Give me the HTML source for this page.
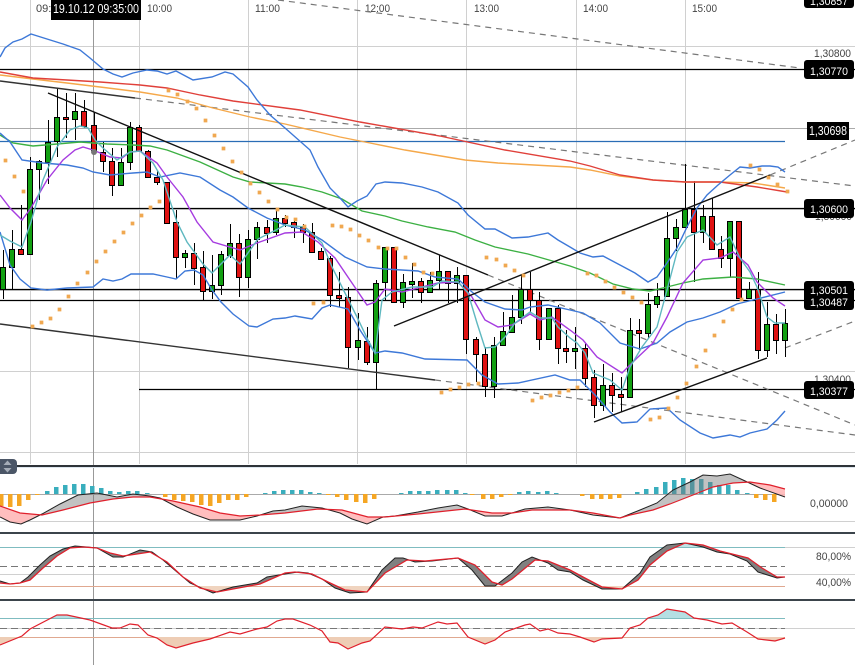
<!DOCTYPE html>
<html><head><meta charset="utf-8"><style>
html,body{margin:0;padding:0;background:#fff;width:855px;height:665px;overflow:hidden}
svg{display:block;filter:blur(.3px)}
text{font-family:"Liberation Sans",sans-serif}
.t{fill:#444;font-size:11px}
.w{fill:#fff;font-size:11px}
.g{fill:#12a012;stroke:#000}
.r{fill:#e01212;stroke:#000}
.l{fill:none}
</style></head><body>
<svg width="855" height="665" viewBox="0 0 855 665" xmlns="http://www.w3.org/2000/svg">
<defs>
<clipPath id="abv"><polygon points="0,0 0,506 20,513 42,515 63,510 90,503 113,499 133,497 150,497 173,501 200,507 220,513 240,516 260,515 285,513 318,509 342,510 368,517 385,517 418,514 465,509 492,513 512,513 532,510 570,510 593,513 620,518 630,515 653,510 670,504 693,495 713,487 733,483 750,482 770,485 785,489 785,0"/></clipPath>
<clipPath id="blw"><polygon points="0,665 0,506 20,513 42,515 63,510 90,503 113,499 133,497 150,497 173,501 200,507 220,513 240,516 260,515 285,513 318,509 342,510 368,517 385,517 418,514 465,509 492,513 512,513 532,510 570,510 593,513 620,518 630,515 653,510 670,504 693,495 713,487 733,483 750,482 770,485 785,489 785,665"/></clipPath>
<clipPath id="t3"><rect x="0" y="600" width="800" height="18"/></clipPath>
<clipPath id="b3"><rect x="0" y="637" width="800" height="28"/></clipPath>
</defs>

<!-- grid -->
<g stroke="#d0d0d0" stroke-width="1" shape-rendering="crispEdges">
<path d="M30.5 0V464M139.5 0V464M248.5 0V464M357.5 0V464M466.5 0V464M576.5 0V464M685.5 0V464"/>
<path d="M0 46.5H855M0 209.5H855M0 290.5H855M0 371.5H855M0 452.5H855"/>
<path d="M0 521.5H855M0 547.5H855M0 574.5H855M0 628.5H855"/>
</g>
<path d="M0 128.5H855" stroke="#aaa" shape-rendering="crispEdges"/>
<path d="M93.5 20V665" stroke="#999" shape-rendering="crispEdges"/>

<!-- axis text -->
<text class="t" x="36" y="12">09:</text>
<text class="t" x="147" y="12" textLength="25" lengthAdjust="spacingAndGlyphs">10:00</text>
<text class="t" x="255" y="12" textLength="25" lengthAdjust="spacingAndGlyphs">11:00</text>
<text class="t" x="365" y="12" textLength="25" lengthAdjust="spacingAndGlyphs">12:00</text>
<text class="t" x="474" y="12" textLength="25" lengthAdjust="spacingAndGlyphs">13:00</text>
<text class="t" x="583" y="12" textLength="25" lengthAdjust="spacingAndGlyphs">14:00</text>
<text class="t" x="692" y="12" textLength="25" lengthAdjust="spacingAndGlyphs">15:00</text>
<text class="t" x="814" y="57" textLength="37" lengthAdjust="spacingAndGlyphs">1,30800</text>
<text class="t" x="815" y="220" textLength="37" lengthAdjust="spacingAndGlyphs">1,30600</text>
<text class="t" x="814" y="383" textLength="37" lengthAdjust="spacingAndGlyphs">1,30400</text>
<text class="t" x="810" y="507" textLength="38" lengthAdjust="spacingAndGlyphs">0,00000</text>
<text class="t" x="816" y="560" textLength="35" lengthAdjust="spacingAndGlyphs">80,00%</text>
<text class="t" x="816" y="586" textLength="35" lengthAdjust="spacingAndGlyphs">40,00%</text>

<!-- horizontal level lines -->
<g stroke="#000" stroke-width="1.2">
<path d="M0 69.5H855M0 208.5H855M0 289.5H855M0 300.5H855M139 389.5H855"/>
</g>
<path d="M0 141.5H785" stroke="#2a6db5" stroke-width="1.2"/>

<!-- dashed trend lines -->
<g stroke="#777" stroke-width="1.2" stroke-dasharray="6 5" fill="none">
<path d="M278 0L800 68"/>
<path d="M135 98L855 186"/>
<path d="M488 275L855 425"/>
<path d="M435 380L855 435"/>
<path d="M770 175L855 140"/>
<path d="M785 348L855 321"/>
</g>

<!-- candles -->
<g shape-rendering="crispEdges">
<path stroke="#000" fill="none" d="M3.5 250V299M12.5 230V290M21.5 205V255M30.5 157V254M39.5 160V200M48.5 120V184M57.5 88V157M66.5 93V138M75.5 93V140M84.5 100V128M94.5 112V151M103.5 142V172M112.5 148V196M121.5 148V185M130.5 122V170M139.5 125V152M148.5 150V178M157.5 170V185M167.5 182V224M176.5 210V279M185.5 250V268M194.5 243V285M203.5 251V301M212.5 255V299M221.5 251V295M230.5 224V258M239.5 234V297M248.5 230V288M257.5 222V259M267.5 220V243M276.5 211V235M285.5 215V227M294.5 218V238M303.5 224V243M312.5 223V252M321.5 248V259M330.5 256V307M339.5 272V307M348.5 287V368M358.5 313V360M367.5 327V365M376.5 280V390M385.5 247V300M394.5 247V303M403.5 274V308M412.5 263V298M421.5 278V303M430.5 272V293M439.5 255V290M448.5 272V303M457.5 267V303M466.5 275V354M476.5 337V382M485.5 347V397M494.5 337V398M503.5 312V345M512.5 295V332M521.5 275V324M530.5 272V313M539.5 292V350M549.5 308V339M558.5 305V364M566.5 330V363M575.5 327V369M585.5 343V387M594.5 370V418M603.5 364V411M612.5 373V412M621.5 377V412M630.5 318V397M639.5 319V350M648.5 293V338M657.5 283V308M667.5 212V297M676.5 219V251M685.5 164V227M694.5 181V282M703.5 205V243M712.5 198V249M721.5 236V268M730.5 221V277M739.5 221V299M749.5 282V299M758.5 272V359M767.5 302V357M776.5 314V354M785.5 309V357"/>
<rect class="g" x="0.5" y="267.5" width="5" height="22"/>
<rect class="g" x="9.5" y="249.5" width="5" height="18"/>
<rect class="r" x="18.5" y="249.5" width="5" height="5"/>
<rect class="g" x="27.5" y="169.5" width="5" height="85"/>
<rect class="g" x="36.5" y="161.5" width="5" height="8"/>
<rect class="g" x="45.5" y="142.5" width="5" height="20"/>
<rect class="g" x="54.5" y="117.5" width="5" height="24"/>
<rect class="r" x="63.5" y="117.5" width="5" height="2"/>
<rect class="g" x="72.5" y="111.5" width="5" height="8"/>
<rect class="r" x="81.5" y="111.5" width="5" height="15"/>
<rect class="r" x="91.5" y="125.5" width="5" height="25"/>
<rect class="r" x="100.5" y="152.5" width="5" height="9"/>
<rect class="r" x="109.5" y="161.5" width="5" height="24"/>
<rect class="g" x="118.5" y="162.5" width="5" height="23"/>
<rect class="g" x="127.5" y="127.5" width="5" height="35"/>
<rect class="r" x="136.5" y="127.5" width="5" height="24"/>
<rect class="r" x="145.5" y="151.5" width="5" height="26"/>
<rect class="r" x="154.5" y="177.5" width="5" height="5"/>
<rect class="r" x="164.5" y="182.5" width="5" height="41"/>
<rect class="r" x="173.5" y="222.5" width="5" height="35"/>
<rect class="g" x="182.5" y="253.5" width="5" height="4"/>
<rect class="r" x="191.5" y="253.5" width="5" height="15"/>
<rect class="r" x="200.5" y="267.5" width="5" height="24"/>
<rect class="g" x="209.5" y="285.5" width="5" height="6"/>
<rect class="g" x="218.5" y="254.5" width="5" height="31"/>
<rect class="g" x="227.5" y="243.5" width="5" height="12"/>
<rect class="r" x="236.5" y="243.5" width="5" height="34"/>
<rect class="g" x="245.5" y="239.5" width="5" height="38"/>
<rect class="g" x="254.5" y="227.5" width="5" height="12"/>
<rect class="r" x="264.5" y="227.5" width="5" height="6"/>
<rect class="g" x="273.5" y="218.5" width="5" height="14"/>
<rect class="r" x="282.5" y="218.5" width="5" height="5"/>
<rect class="r" x="291.5" y="222.5" width="5" height="5"/>
<rect class="r" x="300.5" y="227.5" width="5" height="5"/>
<rect class="r" x="309.5" y="232.5" width="5" height="20"/>
<rect class="r" x="318.5" y="251.5" width="5" height="8"/>
<rect class="r" x="327.5" y="258.5" width="5" height="37"/>
<rect class="r" x="336.5" y="295.5" width="5" height="3"/>
<rect class="r" x="345.5" y="297.5" width="5" height="50"/>
<rect class="g" x="355.5" y="340.5" width="5" height="7"/>
<rect class="r" x="364.5" y="341.5" width="5" height="21"/>
<rect class="g" x="373.5" y="283.5" width="5" height="79"/>
<rect class="g" x="382.5" y="247.5" width="5" height="35"/>
<rect class="r" x="391.5" y="247.5" width="5" height="55"/>
<rect class="g" x="400.5" y="282.5" width="5" height="20"/>
<rect class="g" x="409.5" y="281.5" width="5" height="3"/>
<rect class="r" x="418.5" y="281.5" width="5" height="11"/>
<rect class="g" x="427.5" y="280.5" width="5" height="12"/>
<rect class="g" x="436.5" y="271.5" width="5" height="9"/>
<rect class="r" x="445.5" y="271.5" width="5" height="12"/>
<rect class="g" x="454.5" y="275.5" width="5" height="8"/>
<rect class="r" x="463.5" y="275.5" width="5" height="64"/>
<rect class="r" x="473.5" y="339.5" width="5" height="15"/>
<rect class="r" x="482.5" y="354.5" width="5" height="32"/>
<rect class="g" x="491.5" y="345.5" width="5" height="41"/>
<rect class="g" x="500.5" y="331.5" width="5" height="14"/>
<rect class="g" x="509.5" y="317.5" width="5" height="15"/>
<rect class="g" x="518.5" y="289.5" width="5" height="28"/>
<rect class="r" x="527.5" y="289.5" width="5" height="11"/>
<rect class="r" x="536.5" y="300.5" width="5" height="39"/>
<rect class="g" x="546.5" y="308.5" width="5" height="31"/>
<rect class="r" x="555.5" y="308.5" width="5" height="40"/>
<rect class="r" x="563.5" y="348.5" width="5" height="3"/>
<rect class="g" x="572.5" y="348.5" width="5" height="3"/>
<rect class="r" x="582.5" y="348.5" width="5" height="30"/>
<rect class="r" x="591.5" y="377.5" width="5" height="28"/>
<rect class="g" x="600.5" y="385.5" width="5" height="20"/>
<rect class="r" x="609.5" y="385.5" width="5" height="10"/>
<rect class="r" x="618.5" y="394.5" width="5" height="3"/>
<rect class="g" x="627.5" y="330.5" width="5" height="67"/>
<rect class="r" x="636.5" y="330.5" width="5" height="3"/>
<rect class="g" x="645.5" y="304.5" width="5" height="29"/>
<rect class="g" x="654.5" y="296.5" width="5" height="8"/>
<rect class="g" x="664.5" y="238.5" width="5" height="58"/>
<rect class="g" x="673.5" y="227.5" width="5" height="11"/>
<rect class="g" x="682.5" y="209.5" width="5" height="18"/>
<rect class="r" x="691.5" y="209.5" width="5" height="23"/>
<rect class="g" x="700.5" y="216.5" width="5" height="16"/>
<rect class="r" x="709.5" y="216.5" width="5" height="33"/>
<rect class="r" x="718.5" y="249.5" width="5" height="9"/>
<rect class="g" x="727.5" y="221.5" width="5" height="37"/>
<rect class="r" x="736.5" y="221.5" width="5" height="77"/>
<rect class="g" x="746.5" y="289.5" width="5" height="9"/>
<rect class="r" x="755.5" y="289.5" width="5" height="61"/>
<rect class="g" x="764.5" y="324.5" width="5" height="26"/>
<rect class="r" x="773.5" y="324.5" width="5" height="16"/>
<rect class="g" x="782.5" y="323.5" width="5" height="17"/>
</g>

<!-- moving averages -->
<g fill="none" stroke-width="1.4">
<polyline stroke="#f5a84a" points="0,75 33,79 67,83 100,87 140,92 177,98 213,108 250,117 285,124 340,137 370,143 405,150 435,155 465,160 498,163 570,167 590,170 620,176 653,180 685,182 720,182 753,183 785,188"/>
<polyline stroke="#e0403a" points="0,72 33,78 67,80 100,82 140,85 167,88 200,95 233,101 285,108 300,110 360,122 440,136 505,150 570,161 590,166 620,175 653,180 685,182 720,182 757,187 787,192"/>
<polyline stroke="#3cb043" points="0,135 13,143 33,146 57,144 80,142 107,144 133,145 150,146 167,150 200,162 233,177 250,182 285,184 302,187 322,192 342,199 362,211 385,216 402,221 428,227 455,232 475,240 495,247 528,254 570,266 590,273 613,284 633,289 650,291 667,287 683,283 703,279 733,277 757,279 785,285"/>
<polyline stroke="#3d78d8" points="0,57 5,48 13,42 22,39 31,34 47,39 63,44 80,50 90,58 103,69 113,74 122,77 133,73 147,70 157,71 167,74 176,71 193,80 212,77 225,72 233,74 248,87 257,100 270,115 285,128 310,150 318,167 330,188 340,198 348,207 357,201 367,196 376,184 385,182 402,183 422,187 438,192 458,203 468,215 485,229 495,229 512,238 528,237 548,233 558,240 570,247 580,253 593,257 603,256 620,265 635,273 648,282 657,277 667,263 677,248 687,227 697,208 707,195 718,185 730,175 740,167 750,168 762,166 770,166 778,167 785,172"/>
<polyline stroke="#3d78d8" points="0,133 10,142 22,160 43,163 67,165 83,168 93,172 110,175 133,173 147,172 160,177 180,173 200,177 220,190 233,197 248,208 267,218 285,225 305,230 322,240 345,257 367,267 385,269 418,271 435,277 458,279 472,292 485,302 505,309 522,310 530,307 548,305 570,310 583,313 600,323 620,343 640,349 657,343 670,332 687,322 703,318 720,312 737,304 757,299 785,292"/>
<polyline stroke="#3d78d8" points="0,232 10,265 20,279 31,288 47,290 67,288 93,287 103,279 113,281 122,279 131,274 153,274 167,277 176,279 185,271 194,270 203,275 212,290 221,302 233,314 249,326 257,327 273,319 285,318 295,316 312,319 322,308 330,305 348,309 360,330 375,353 385,351 402,353 425,359 467,360 482,375 498,384 518,383 555,375 570,380 580,380 597,397 610,412 622,423 637,422 650,409 667,408 680,420 700,433 713,438 730,435 740,437 750,433 767,429 777,420 785,411"/>
<polyline stroke="#a63ce0" points="0,195 10,208 22,220 31,208 47,180 63,160 75,150 83,147 93,150 110,157 122,158 130,152 140,151 157,163 167,177 183,197 197,222 213,242 240,250 257,243 285,233 302,232 318,242 335,258 352,283 367,305 375,302 385,289 402,292 418,288 438,283 458,282 472,297 485,320 498,327 512,325 530,314 540,320 552,317 570,330 583,340 597,357 622,373 637,358 653,343 667,317 683,283 703,260 720,258 733,252 748,265 757,282 773,298 785,306"/>
<polyline stroke="#5fb8c0" points="0,235 10,241 22,247 31,222 43,180 57,147 70,130 80,126 88,128 95,140 103,148 117,160 130,152 140,151 153,163 163,180 177,222 187,242 203,264 212,273 230,255 240,264 258,239 276,230 285,225 305,227 322,243 332,267 345,293 357,317 368,340 375,353 382,300 392,292 412,287 432,287 442,281 458,282 468,293 477,323 485,348 495,347 505,337 515,323 530,312 540,318 552,318 558,327 570,338 577,343 585,353 593,373 610,380 622,390 630,367 642,347 657,327 667,290 677,252 687,237 703,230 717,245 730,237 740,258 750,272 757,287 767,317 775,323 785,323"/>
</g>

<!-- solid trend lines -->
<g stroke="#111" stroke-width="1.4" fill="none">
<path d="M0 81L135 98" stroke="#333"/>
<path d="M48 93L488 275"/>
<path d="M0 324L435 380" stroke="#333"/>
<path d="M394 326L770 175"/>
<path d="M594 422L767 358"/>
</g>

<!-- parabolic SAR -->
<g fill="#f0a850" stroke="#f0a850" stroke-width=".7">
<path d="M4 159h3v3h-3zM13 175h3v3h-3zM22 190h3v3h-3zM31 325h3v3h-3zM40 321h3v3h-3zM49 317h3v3h-3zM58 308h3v3h-3zM67 295h3v3h-3zM76 282h3v3h-3zM86 271h3v3h-3zM95 260h3v3h-3zM104 250h3v3h-3zM113 240h3v3h-3zM122 231h3v3h-3zM131 222h3v3h-3zM140 214h3v3h-3zM149 206h3v3h-3zM158 200h3v3h-3zM167 89h3v3h-3zM176 93h3v3h-3zM186 100h3v3h-3zM195 107h3v3h-3zM204 119h3v3h-3zM213 134h3v3h-3zM222 147h3v3h-3zM231 160h3v3h-3zM240 171h3v3h-3zM249 182h3v3h-3zM258 191h3v3h-3zM267 200h3v3h-3zM276 208h3v3h-3zM285 216h3v3h-3zM294 218h3v3h-3zM303 225h3v3h-3zM312 302h3v3h-3zM322 301h3v3h-3zM331 224h3v3h-3zM340 225h3v3h-3zM349 228h3v3h-3zM358 234h3v3h-3zM367 239h3v3h-3zM377 246h3v3h-3zM386 247h3v3h-3zM395 247h3v3h-3zM404 256h3v3h-3zM413 263h3v3h-3zM422 271h3v3h-3zM431 272h3v3h-3zM440 391h3v3h-3zM449 388h3v3h-3zM458 386h3v3h-3zM467 383h3v3h-3zM477 382h3v3h-3zM485 256h3v3h-3zM495 258h3v3h-3zM504 264h3v3h-3zM513 269h3v3h-3zM522 274h3v3h-3zM531 399h3v3h-3zM540 396h3v3h-3zM549 394h3v3h-3zM558 391h3v3h-3zM567 389h3v3h-3zM576 386h3v3h-3zM586 272h3v3h-3zM595 274h3v3h-3zM604 280h3v3h-3zM613 286h3v3h-3zM622 291h3v3h-3zM631 296h3v3h-3zM640 301h3v3h-3zM649 418h3v3h-3zM658 416h3v3h-3zM667 407h3v3h-3zM676 396h3v3h-3zM685 382h3v3h-3zM695 365h3v3h-3zM704 349h3v3h-3zM713 334h3v3h-3zM722 320h3v3h-3zM731 308h3v3h-3zM740 298h3v3h-3zM749 164h3v3h-3zM758 168h3v3h-3zM767 176h3v3h-3zM776 183h3v3h-3zM786 190h3v3h-3z"/>
</g>
<circle cx="94" cy="152" r="3" fill="#777"/>

<!-- labels -->
<g>
<rect x="804" y="-8" width="50" height="16" rx="3" fill="#000"/>
<rect x="804" y="60" width="50" height="19" rx="3" fill="#000"/>
<rect x="807" y="122" width="42" height="18" fill="#000"/>
<rect x="804" y="199" width="50" height="19" rx="3" fill="#000"/>
<rect x="804" y="281" width="50" height="29" rx="3" fill="#000"/>
<rect x="804" y="381" width="50" height="18" rx="3" fill="#000"/>
<rect x="51" y="0" width="90" height="20" fill="#000"/>
</g>
<text class="w" x="810" y="5" textLength="38" lengthAdjust="spacingAndGlyphs">1,30857</text>
<text class="w" x="810" y="75" textLength="38" lengthAdjust="spacingAndGlyphs">1,30770</text>
<text class="w" x="809" y="135" style="font-size:12.5px" textLength="38" lengthAdjust="spacingAndGlyphs">1,30698</text>
<text class="w" x="810" y="213" textLength="38" lengthAdjust="spacingAndGlyphs">1,30600</text>
<text class="w" x="810" y="294" textLength="38" lengthAdjust="spacingAndGlyphs">1,30501</text>
<text class="w" x="810" y="306" textLength="38" lengthAdjust="spacingAndGlyphs">1,30487</text>
<text class="w" x="810" y="395" textLength="38" lengthAdjust="spacingAndGlyphs">1,30377</text>
<text class="w" x="53" y="13" style="font-size:12.5px" textLength="86" lengthAdjust="spacingAndGlyphs">19.10.12 09:35:00</text>

<!-- panel separators -->
<rect x="0" y="465" width="855" height="2" fill="#2e3338"/>
<rect x="0" y="467" width="855" height="1" fill="#dde6ee"/>
<rect x="0" y="532" width="855" height="2" fill="#3b444b"/>
<rect x="0" y="599" width="855" height="2" fill="#3b444b"/>
<rect x="-4" y="459" width="21" height="15" rx="4" fill="#4b5667"/>
<path d="M3.5 465L7.5 460.5L11.5 465ZM3.5 468L7.5 472.5L11.5 468Z" fill="#a5adb8"/>

<!-- MACD -->
<path d="M0 494.5H785" stroke="#aaa" shape-rendering="crispEdges"/>
<path stroke="#39aebd" stroke-width="4.5" fill="none" shape-rendering="crispEdges" d="M47 494V491M56 494V487M65 494V485M74 494V484M83 494V484M92 494V486M101 494V488M110 494V491M119 494V492M128 494V491M137 494V491M147 494V493M265 494V493M274 494V491M283 494V490M292 494V490M301 494V490M310 494V492M319 494V493M401 494V493M410 494V491M419 494V491M428 494V491M437 494V490M447 494V490M456 494V490M465 494V493M519 494V492M528 494V491M538 494V492M547 494V491M556 494V493M637 494V492M646 494V489M656 494V487M665 494V482M674 494V480M683 494V478M692 494V479M701 494V479M710 494V482M719 494V485M728 494V485M737 494V490M747 494V493"/>
<path stroke="#f5a623" stroke-width="4.5" fill="none" shape-rendering="crispEdges" d="M1 494V506M10 494V507M19 494V506M28 494V500M37 494V495M165 494V497M174 494V500M183 494V501M192 494V502M201 494V505M210 494V506M219 494V503M228 494V500M237 494V500M246 494V497M328 494V495M337 494V497M346 494V500M356 494V502M365 494V503M374 494V499M472 494V495M483 494V499M492 494V499M501 494V497M510 494V495M582 494V496M592 494V499M601 494V499M610 494V499M619 494V498M756 494V498M765 494V500M774 494V502"/>
<polygon clip-path="url(#abv)" fill="#777" fill-opacity=".45" points="0,517 10,522 21,524 30,520 42,514 60,504 78,495 97,493 117,497 133,494 150,496 160,498 177,507 193,514 210,520 220,520 240,520 257,516 273,511 285,510 302,506 322,508 340,513 352,519 367,524 383,517 395,516 418,512 438,508 457,505 468,509 485,516 502,516 525,509 548,507 570,510 593,515 620,518 640,510 657,503 673,490 690,482 703,475 717,476 730,474 743,480 760,488 783,496 785,489 770,485 750,482 733,483 713,487 693,495 670,504 653,510 630,515 620,518 593,513 570,510 532,510 512,513 492,513 465,509 418,514 385,517 368,517 342,510 318,509 285,513 260,515 240,516 220,513 200,507 173,501 150,497 133,497 113,499 90,503 63,510 42,515 20,513 0,506"/>
<polygon clip-path="url(#blw)" fill="#ffb3b3" fill-opacity=".85" points="0,517 10,522 21,524 30,520 42,514 60,504 78,495 97,493 117,497 133,494 150,496 160,498 177,507 193,514 210,520 220,520 240,520 257,516 273,511 285,510 302,506 322,508 340,513 352,519 367,524 383,517 395,516 418,512 438,508 457,505 468,509 485,516 502,516 525,509 548,507 570,510 593,515 620,518 640,510 657,503 673,490 690,482 703,475 717,476 730,474 743,480 760,488 785,497 785,489 770,485 750,482 733,483 713,487 693,495 670,504 653,510 630,515 620,518 593,513 570,510 532,510 512,513 492,513 465,509 418,514 385,517 368,517 342,510 318,509 285,513 260,515 240,516 220,513 200,507 173,501 150,497 133,497 113,499 90,503 63,510 42,515 20,513 0,506"/>
<polyline class="l" stroke="#222" points="0,517 10,522 21,524 30,520 42,514 60,504 78,495 97,493 117,497 133,494 150,496 160,498 177,507 193,514 210,520 220,520 240,520 257,516 273,511 285,510 302,506 322,508 340,513 352,519 367,524 383,517 395,516 418,512 438,508 457,505 468,509 485,516 502,516 525,509 548,507 570,510 593,515 620,518 640,510 657,503 673,490 690,482 703,475 717,476 730,474 743,480 760,488 785,497"/>
<polyline class="l" stroke="#e0202c" stroke-width="1.2" points="0,506 20,513 42,515 63,510 90,503 113,499 133,497 150,497 173,501 200,507 220,513 240,516 260,515 285,513 318,509 342,510 368,517 385,517 418,514 465,509 492,513 512,513 532,510 570,510 593,513 620,518 630,515 653,510 670,504 693,495 713,487 733,483 750,482 770,485 785,489"/>

<!-- Stochastic -->
<path d="M0 547.5H785" stroke="#7fbcc0" shape-rendering="crispEdges"/>
<path d="M0 586.5H785" stroke="#e0a890" shape-rendering="crispEdges"/>
<path d="M0 566.5H785" stroke="#777" stroke-dasharray="7 4"/>
<polygon fill="#f0d4bf" points="196,586 213,593 233,589 240,586"/>
<polygon fill="#f0d4bf" points="330,586 350,593 367,592 372,586"/>
<polygon fill="#f0d4bf" points="598,586 622,589 630,586"/>
<polygon fill="#bfe3e6" points="664,547 685,543 706,547"/>
<polygon fill="#808080" points="0,581 10,584 20,583 28,577 40,565 50,556 63,549 75,546 87,547 97,548 113,557 123,557 140,550 152,552 163,560 177,572 190,583 213,593 223,590 233,587 257,583 267,577 285,574 298,572 308,573 322,579 335,588 350,593 367,592 382,570 395,558 403,558 415,562 432,561 458,558 472,570 485,586 495,586 512,573 522,562 532,557 548,563 558,570 570,572 583,580 602,589 622,589 640,573 650,557 667,545 685,543 703,547 717,552 730,554 747,561 758,572 777,578 785,577 777,577 762,568 748,558 720,551 703,545 685,543 667,551 650,565 638,580 622,589 602,587 583,577 570,570 548,561 535,560 512,579 502,585 492,582 475,565 458,558 425,561 407,560 385,573 367,592 345,590 328,582 312,574 295,572 285,573 260,584 233,589 217,592 200,588 183,577 167,562 150,552 137,554 123,556 110,553 97,548 83,547 70,548 57,556 43,568 30,580 20,583 10,584 0,583"/>
<polyline class="l" stroke="#222" points="0,581 10,584 20,583 28,577 40,565 50,556 63,549 75,546 87,547 97,548 113,557 123,557 140,550 152,552 163,560 177,572 190,583 213,593 223,590 233,587 257,583 267,577 285,574 298,572 308,573 322,579 335,588 350,593 367,592 382,570 395,558 403,558 415,562 432,561 458,558 472,570 485,586 495,586 512,573 522,562 532,557 548,563 558,570 570,572 583,580 602,589 622,589 640,573 650,557 667,545 685,543 703,547 717,552 730,554 747,561 758,572 777,578 785,577"/>
<polyline class="l" stroke="#e0202c" stroke-width="1.3" points="0,583 10,584 20,583 30,580 43,568 57,556 70,548 83,547 97,548 110,553 123,556 137,554 150,552 167,562 183,577 200,588 217,592 233,589 260,584 285,573 295,572 312,574 328,582 345,590 367,592 385,573 407,560 425,561 458,558 475,565 492,582 502,585 512,579 535,560 548,561 570,570 583,577 602,587 622,589 638,580 650,565 667,551 685,543 703,545 720,551 748,558 762,568 777,577 785,577"/>

<!-- RSI -->
<path d="M0 618.5H785" stroke="#7fbcc0" shape-rendering="crispEdges"/>
<path d="M0 637.5H785" stroke="#e0a890" shape-rendering="crispEdges"/>
<path d="M0 628.5H785" stroke="#777" stroke-dasharray="7 4"/>
<polygon clip-path="url(#t3)" fill="#b5dfe3" points="0,618 0,645 22,636 30,629 57,615 67,615 90,620 112,628 120,628 130,624 138,625 148,635 157,638 167,645 176,648 193,643 210,639 230,632 240,634 257,629 267,627 277,621 285,619 293,619 310,625 322,631 330,642 338,643 348,649 362,643 370,641 385,627 402,629 413,627 422,628 438,622 447,624 457,623 468,637 485,644 495,640 505,632 525,625 530,624 540,631 548,629 558,633 570,634 580,637 594,642 602,639 622,638 630,628 640,625 648,618 658,615 667,609 685,612 694,618 707,620 722,624 732,623 747,632 758,639 775,641 785,638 785,618"/>
<polygon clip-path="url(#b3)" fill="#eecdb5" points="0,637 0,645 22,636 30,629 57,615 67,615 90,620 112,628 120,628 130,624 138,625 148,635 157,638 167,645 176,648 193,643 210,639 230,632 240,634 257,629 267,627 277,621 285,619 293,619 310,625 322,631 330,642 338,643 348,649 362,643 370,641 385,627 402,629 413,627 422,628 438,622 447,624 457,623 468,637 485,644 495,640 505,632 525,625 530,624 540,631 548,629 558,633 570,634 580,637 594,642 602,639 622,638 630,628 640,625 648,618 658,615 667,609 685,612 694,618 707,620 722,624 732,623 747,632 758,639 775,641 785,638 785,637"/>
<polyline class="l" stroke="#e0202c" stroke-width="1.2" points="0,645 22,636 30,629 57,615 67,615 90,620 112,628 120,628 130,624 138,625 148,635 157,638 167,645 176,648 193,643 210,639 230,632 240,634 257,629 267,627 277,621 285,619 293,619 310,625 322,631 330,642 338,643 348,649 362,643 370,641 385,627 402,629 413,627 422,628 438,622 447,624 457,623 468,637 485,644 495,640 505,632 525,625 530,624 540,631 548,629 558,633 570,634 580,637 594,642 602,639 622,638 630,628 640,625 648,618 658,615 667,609 685,612 694,618 707,620 722,624 732,623 747,632 758,639 775,641 785,638"/>
</svg>
</body></html>
